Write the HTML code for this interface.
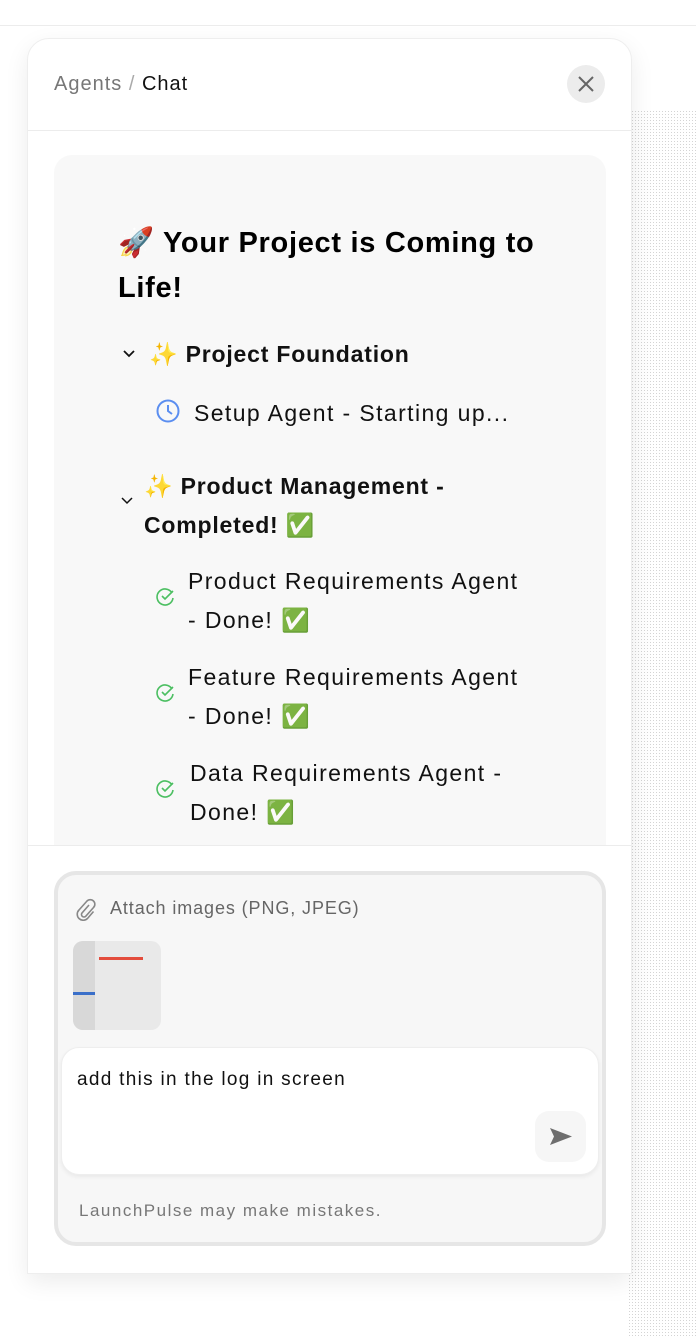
<!DOCTYPE html>
<html><head><style>
body{margin:0;width:696px;height:1340px;background:#fff;position:relative;overflow:hidden;font-family:"Liberation Sans",sans-serif;}
.topline{position:absolute;left:0;right:0;top:25px;height:1px;background:#ececec}
.dots{position:absolute;left:628px;top:110px;width:68px;height:1228px;background-image:radial-gradient(#d4d4d4 0.6px,transparent 0.7px);background-size:3px 3px}
.panel{position:absolute;left:27px;top:38px;width:603px;height:1234px;background:#fff;border:1px solid #eee;border-radius:22px 22px 0 0;box-shadow:0 8px 24px rgba(0,0,0,.08);overflow:hidden}
.hdr{height:91px;border-bottom:1px solid #ececec;position:relative}
.crumb{position:absolute;left:26px;top:34px;font-size:20px;color:#777;letter-spacing:1px}
.crumb b{color:#111;font-weight:normal}
.close{position:absolute;left:539px;top:26px;width:38px;height:38px;border-radius:50%;background:#ececec}
.scroll{position:absolute;top:92px;left:0;right:0;height:714px;overflow:hidden;border-bottom:1px solid #ececec}
.card{position:absolute;left:26px;top:24px;width:552px;height:800px;background:#f8f8f8;border-radius:18px}
.t{position:absolute;color:#111;white-space:nowrap}
h1{position:absolute;left:64px;top:66px;margin:0;font-size:29px;line-height:45px;font-weight:bold;width:460px;letter-spacing:0.7px}
.b{font-weight:bold;font-size:23px;letter-spacing:0.8px}
.n{font-size:23px;letter-spacing:1.4px}
.box{position:absolute;left:26px;top:832px;width:544px;height:367px;border:4px solid #e6e6e6;border-radius:22px;background:#f7f7f7}
.ta{position:absolute;left:3px;top:172px;width:536px;height:126px;background:#fff;border:1px solid #eee;border-radius:18px;box-shadow:0 2px 4px rgba(0,0,0,.06)}
.send{position:absolute;left:473px;top:63px;width:51px;height:51px;border-radius:14px;background:#f6f6f6}
.thumb{position:absolute;left:15px;top:66px;width:88px;height:89px;border-radius:10px;background:#e9e9e9;overflow:hidden}
</style></head><body>
<div class="topline"></div>
<div class="dots"></div>
<div class="panel">
 <div class="hdr"><div class="crumb">Agents <span style="color:#aaa">/</span> <b>Chat</b></div>
  <div class="close"><svg width="38" height="38"><path d="M12 12L26 26M26 12L12 26" stroke="#666" stroke-width="2"/></svg></div></div>
 <div class="scroll"><div class="card">
  <h1>🚀 Your Project is Coming to Life!</h1>
  <svg style="position:absolute;left:68px;top:194px" width="14" height="10"><path d="M2 2l5 5 5-5" stroke="#111" stroke-width="1.8" fill="none"/></svg>
  <div class="t b" style="left:95px;top:186px">✨ Project Foundation</div>
  <svg style="position:absolute;left:101px;top:243px" width="26" height="26"><circle cx="13" cy="13" r="10.5" stroke="#5b8ef0" stroke-width="2" fill="none"/><path d="M13 7v6l4 3" stroke="#5b8ef0" stroke-width="2" fill="none"/></svg>
  <div class="t n" style="left:140px;top:245px">Setup Agent - Starting up...</div>
  <svg style="position:absolute;left:67px;top:342px" width="12" height="8"><path d="M1 1l5 5 5-5" stroke="#111" stroke-width="1.5" fill="none"/></svg>
  <div class="t b" style="left:90px;top:312px;line-height:39px">✨ Product Management -<br>Completed! ✅</div>
  <svg style="position:absolute;left:102px;top:432px" width="20" height="20"><path d="M16 6A8 8 0 1 0 17 11" stroke="#4cbf62" stroke-width="1.6" fill="none"/><path d="M6 9l3 3 8-8" stroke="#4cbf62" stroke-width="1.6" fill="none"/></svg>
  <div class="t n" style="left:134px;top:407px;line-height:39px">Product Requirements Agent<br>- Done! ✅</div>
  <svg style="position:absolute;left:102px;top:528px" width="20" height="20"><path d="M16 6A8 8 0 1 0 17 11" stroke="#4cbf62" stroke-width="1.6" fill="none"/><path d="M6 9l3 3 8-8" stroke="#4cbf62" stroke-width="1.6" fill="none"/></svg>
  <div class="t n" style="left:134px;top:503px;line-height:39px">Feature Requirements Agent<br>- Done! ✅</div>
  <svg style="position:absolute;left:102px;top:624px" width="20" height="20"><path d="M16 6A8 8 0 1 0 17 11" stroke="#4cbf62" stroke-width="1.6" fill="none"/><path d="M6 9l3 3 8-8" stroke="#4cbf62" stroke-width="1.6" fill="none"/></svg>
  <div class="t n" style="left:136px;top:599px;line-height:39px">Data Requirements Agent -<br>Done! ✅</div>
 </div></div>
 <div class="box">
  <svg style="position:absolute;left:16px;top:22px" width="22" height="24"><path d="M15 8l-7 8a2.5 2.5 0 0 0 3.5 3.5l8-9a4.5 4.5 0 0 0-6.5-6.5l-8 9a6 6 0 0 0 8.5 8.5l6-7" stroke="#888" stroke-width="1.6" fill="none"/></svg>
  <div class="t" style="left:52px;top:23px;font-size:18px;color:#666;letter-spacing:0.9px">Attach images (PNG, JPEG)</div>
  <div class="thumb"><div style="position:absolute;left:0;top:0;width:22px;height:89px;background:#d8d8d8"></div><div style="position:absolute;left:26px;top:16px;width:44px;height:3px;background:#e34c3c"></div><div style="position:absolute;left:0;top:51px;width:22px;height:3px;background:#3a6fc9"></div></div>
  <div class="ta"><div class="t" style="left:15px;top:21px;font-size:19px;letter-spacing:1.3px">add this in the log in screen</div>
   <div class="send"><svg width="51" height="51"><path d="M15 17l22 8.5-22 8.5 4-8.5z" fill="#6e6e6e"/></svg></div></div>
  <div class="t" style="left:21px;top:326px;font-size:17px;color:#777;letter-spacing:1.5px">LaunchPulse may make mistakes.</div>
 </div>
</div>
</body></html>
